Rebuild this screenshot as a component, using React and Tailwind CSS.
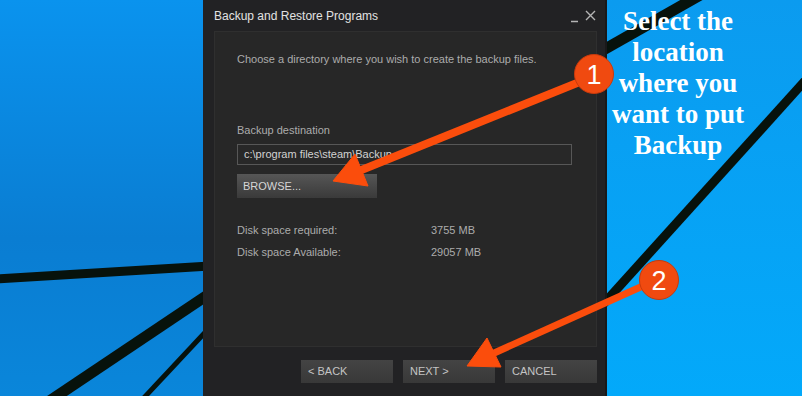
import React from 'react';

const sans = { fontFamily: '"Liberation Sans", Arial, sans-serif' };

const Wallpaper = () => (
  <svg className="absolute inset-0" width="802" height="396" viewBox="0 0 802 396">
    <defs>
      <linearGradient id="bgL" x1="0" y1="0" x2="0" y2="1">
        <stop offset="0" stopColor="#0a93ee" />
        <stop offset="0.6" stopColor="#0a7dd2" />
        <stop offset="1" stopColor="#0a86da" />
      </linearGradient>
      <linearGradient id="bgR" x1="0" y1="0" x2="0" y2="1">
        <stop offset="0" stopColor="#0b9bef" />
        <stop offset="1" stopColor="#03a9fa" />
      </linearGradient>
    </defs>
    <rect x="0" y="0" width="210" height="396" fill="url(#bgL)" />
    <rect x="600" y="0" width="202" height="396" fill="url(#bgR)" />
    <g stroke="#07120c" strokeLinecap="butt">
      <line x1="-5" y1="279" x2="210" y2="266" strokeWidth="9" />
      <line x1="48" y1="402" x2="212" y2="292" strokeWidth="11" />
      <line x1="140" y1="402" x2="212" y2="325" strokeWidth="5" />
      <line x1="598" y1="53" x2="702" y2="-6" strokeWidth="11" />
      <line x1="822" y1="62" x2="598" y2="310" strokeWidth="9" />
    </g>
  </svg>
);

const Annotations = () => (
  <svg className="absolute inset-0 pointer-events-none" width="802" height="396" viewBox="0 0 802 396">
    <g fill="#fb4d0c" stroke="#fb4d0c">
      <line x1="582" y1="81" x2="359" y2="171" strokeWidth="8" />
      <polygon points="333,181 355,154 368,186" strokeWidth="1" />
      <line x1="645" y1="285" x2="492" y2="354" strokeWidth="7" />
      <polygon points="467,366 487,338 501,367" strokeWidth="1" />
    </g>
    <circle cx="594" cy="74" r="19.5" fill="#f04a10" stroke="#c83a0c" strokeWidth="1" />
    <circle cx="659" cy="280" r="19.5" fill="#f04a10" stroke="#c83a0c" strokeWidth="1" />
    <text x="594" y="84" textAnchor="middle" fill="#ffffff" fontSize="27" fontFamily='"Liberation Sans", Arial, sans-serif'>1</text>
    <text x="659" y="290" textAnchor="middle" fill="#ffffff" fontSize="27" fontFamily='"Liberation Sans", Arial, sans-serif'>2</text>
  </svg>
);

const Button = ({ children, className = '' }) => (
  <div
    className={`h-[23px] w-[92px] flex items-center pl-[7px] text-[11px] text-[#c4c4c4] bg-[linear-gradient(#444444,#383838)] ${className}`}
  >
    {children}
  </div>
);

export default function App() {
  return (
    <div className="relative w-[802px] h-[396px] overflow-hidden bg-[#0a8ae0]" style={sans}>
      <Wallpaper />
      <div className="relative flex h-full">
        <div className="w-[203px] shrink-0" />

        {/* dialog */}
        <div className="w-[404px] shrink-0 h-full bg-[#222224] border-r-2 border-[#19191a] flex flex-col">
          <div className="h-[31px] flex items-center justify-between pl-[11px] pr-[9px]">
            <span className="text-[12px] text-[#e2e2e2]">Backup and Restore Programs</span>
            <div className="flex items-center gap-[6px] text-[#b4b4b4]">
              <svg width="8" height="14" viewBox="0 0 8 14">
                <line x1="0" y1="12.5" x2="7" y2="12.5" stroke="#b4b4b4" strokeWidth="1.5" />
              </svg>
              <svg width="11" height="11" viewBox="0 0 11 11">
                <path d="M1 1 L10 10 M10 1 L1 10" stroke="#b4b4b4" strokeWidth="1.4" />
              </svg>
            </div>
          </div>

          <div className="ml-[11px] mr-[8px] h-[316px] bg-[#272727] border border-[#2f2f2f] pl-[22px] pt-[20px] text-[11px] text-[#acacac]">
            <p className="leading-[14px]">Choose a directory where you wish to create the backup files.</p>

            <p className="leading-[14px] mt-[57px]">Backup destination</p>
            <div className="mt-[7px] w-[335px] h-[21px] border border-[#575757] bg-[#282828] flex items-center pl-[6px] text-[#d2d2d2]">
              c:\program files\steam\Backup
            </div>
            <div className="mt-[9px] w-[140px] h-[24px] flex items-center pl-[6px] text-[#d6d6d6] bg-[linear-gradient(#565656,#3a3a3a)]">
              BROWSE...
            </div>

            <div className="mt-[25px] flex flex-col gap-[8px] leading-[14px]">
              <div className="flex">
                <span className="w-[194px]">Disk space required:</span>
                <span>3755 MB</span>
              </div>
              <div className="flex">
                <span className="w-[194px]">Disk space Available:</span>
                <span>29057 MB</span>
              </div>
            </div>
          </div>

          <div className="mt-[13px] flex justify-end gap-[10px] pr-[8px]">
            <Button>&lt; BACK</Button>
            <Button>NEXT &gt;</Button>
            <Button>CANCEL</Button>
          </div>
        </div>

        {/* caption */}
        <div className="w-[142px] shrink-0 pt-[6px] text-center text-white font-bold text-[27px] leading-[31px] whitespace-nowrap" style={{ fontFamily: '"Liberation Serif", "Times New Roman", serif' }}>
          Select the<br />location<br />where you<br />want to put<br />Backup
        </div>
      </div>
      <Annotations />
    </div>
  );
}
